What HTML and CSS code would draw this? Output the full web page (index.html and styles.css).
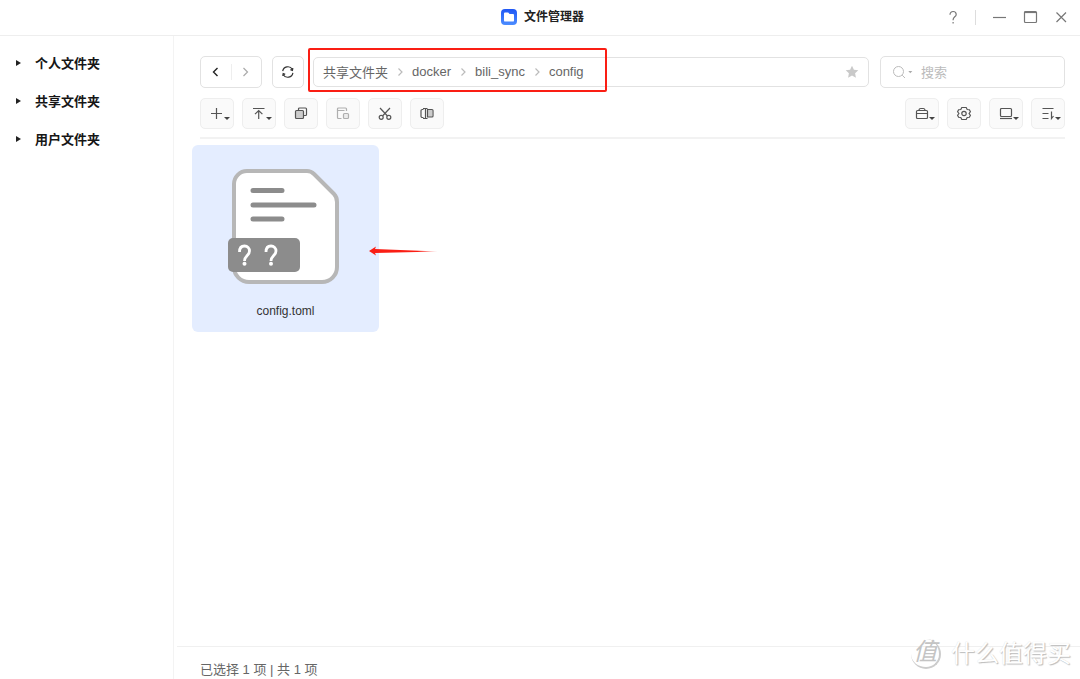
FILE: index.html
```html
<!DOCTYPE html>
<html lang="zh-CN">
<head>
<meta charset="utf-8">
<title>文件管理器</title>
<link rel="stylesheet" href="styles.css">
</head>
<body>
<div class="window">
  <header class="titlebar">
    <h1 class="title">
      <svg class="app-icon" width="16" height="16" viewBox="0 0 16 16"><defs><linearGradient id="blue" x2="0" y2="1"><stop stop-color="#1f57f5"/><stop offset="1" stop-color="#4c8dff"/></linearGradient></defs><rect width="16" height="16" rx="4" fill="url(#blue)"/><path d="M3 4.600a1 1 0 0 1 1-1h3.200l1.400 1.400H12a1 1 0 0 1 1 1v5.400a1.200 1.200 0 0 1-1.200 1.200H4.200A1.200 1.200 0 0 1 3 11.400z" fill="#fff"/></svg>
      文件管理器
    </h1>
    <div class="controls">
      <button class="control" aria-label="帮助"><svg width="16" height="16" viewBox="0 0 16 16"><path d="M6 4.700C6 2.700 7.300 1.500 9.100 1.500s3.100 1.200 3.100 2.900c0 2.300-3.100 2.600-3.100 5.300v.6M9.100 12v1.500"/></svg></button>
      <span class="separator"></span>
      <button class="control" aria-label="最小化"><svg width="16" height="16" viewBox="0 0 16 16"><path d="M2 7.500h13"/></svg></button>
      <button class="control" aria-label="最大化"><svg width="16" height="16" viewBox="0 0 16 16"><rect x="2.500" y="1.500" width="12" height="11" rx="1"/><path d="M2.500 2.500h12"/></svg></button>
      <button class="control" aria-label="关闭"><svg width="16" height="16" viewBox="0 0 16 16"><path d="M3.500 2.500l9.500 9.500M13 2.500L3.500 12"/></svg></button>
    </div>
  </header>
  <div class="body">
    <nav class="sidebar">
      <button class="folder"><span class="caret"></span>个人文件夹</button>
      <button class="folder"><span class="caret"></span>共享文件夹</button>
      <button class="folder"><span class="caret"></span>用户文件夹</button>
    </nav>
    <main class="main">
      <div class="navrow">
        <div class="history">
          <button class="step" aria-label="后退"><svg width="16" height="16" viewBox="0 0 16 16"><path d="M9.500 4L5.500 8l4 4" stroke="#222" stroke-width="1.400"/></svg></button>
          <button class="step" aria-label="前进" disabled><svg width="16" height="16" viewBox="0 0 16 16"><path d="M5.500 4l4 4-4 4" stroke="#aaa" stroke-width="1.200"/></svg></button>
        </div>
        <button class="refresh" aria-label="刷新"><svg width="16" height="16" viewBox="0 0 16 16"><path d="M2.700 7.200a5.200 5.200 0 0 1 9.600-1.900M12.900 8.800a5.200 5.200 0 0 1-9.600 1.900M12.900 4.200l-.5 2.200-2-.8M2.700 11.800l.5-2.200 2 .8" stroke="#333" stroke-width="1.200"/></svg></button>
        <div class="path">
          <a class="crumb" href="#">共享文件夹</a>
          <svg class="chevron" width="8" height="10" viewBox="0 0 8 10"><path d="M2.500 1.500L6 5 2.500 8.500"/></svg>
          <a class="crumb" href="#">docker</a>
          <svg class="chevron" width="8" height="10" viewBox="0 0 8 10"><path d="M2.500 1.500L6 5 2.500 8.500"/></svg>
          <a class="crumb" href="#">bili_sync</a>
          <svg class="chevron" width="8" height="10" viewBox="0 0 8 10"><path d="M2.500 1.500L6 5 2.500 8.500"/></svg>
          <a class="crumb" href="#">config</a>
          <button class="star" aria-label="收藏"><svg width="14" height="14" viewBox="0 0 14 14"><path d="M7 .8l1.900 4 4.400.5-3.200 3 .8 4.400L7 10.600l-3.900 2.100.8-4.400-3.200-3 4.400-.5z" fill="#c9c9c9" stroke="none"/></svg></button>
          <span class="highlight"></span>
        </div>
        <label class="search">
          <svg width="22" height="16" viewBox="0 0 22 16"><circle cx="6.500" cy="7.500" r="5" stroke="#bbb"/><path d="M10.200 11.200l2.800 2.800" stroke="#bbb"/><path d="M16.300 7h4l-2 2.200z" fill="#aaa" stroke="none"/></svg>
          <input class="search-input" type="text" placeholder="搜索" aria-label="搜索">
        </label>
      </div>
      <div class="toolbar">
        <button class="tool menu" aria-label="新建"><svg width="16" height="16" viewBox="0 0 16 16"><path d="M7.500 2v11M2 7.500h11"/></svg></button>
        <button class="tool menu" aria-label="上传"><svg width="16" height="16" viewBox="0 0 16 16"><path d="M2 2.500h11.500M7.700 13V4.500M4 8.200l3.700-3.700 3.700 3.700"/></svg></button>
        <button class="tool" aria-label="复制"><svg width="16" height="16" viewBox="0 0 16 16"><rect x="2.500" y="4.500" width="8" height="8" rx="1" fill="#ccc"/><path d="M5.500 4.500V3a1 1 0 0 1 1-1h6a1 1 0 0 1 1 1v5.500a1 1 0 0 1-1 1h-2"/></svg></button>
        <button class="tool" aria-label="粘贴" disabled><svg width="16" height="16" viewBox="0 0 16 16"><path d="M6.500 12.500h-3a1 1 0 0 1-1-1v-8.500a1 1 0 0 1 1-1h7a1 1 0 0 1 1 1V5M2.500 4.500h7"/><rect x="8.500" y="7.500" width="5" height="5" rx="1" fill="#ddd"/></svg></button>
        <button class="tool" aria-label="剪切"><svg width="16" height="16" viewBox="0 0 16 16"><path d="M3 2l7.500 8M13 2L5.500 10"/><circle cx="4.200" cy="11.300" r="2"/><circle cx="11.800" cy="11.300" r="2"/></svg></button>
        <button class="tool" aria-label="重命名"><svg width="16" height="16" viewBox="0 0 16 16"><rect x="8" y="4" width="5" height="7" fill="#ccc" stroke="none"/><path d="M4.500 3.500H3.300A1.300 1.300 0 0 0 2 4.800v5.400a1.300 1.300 0 0 0 1.300 1.300h1.200M4 2.500h4.500M4 12.500h4.500M6.500 2.500v10M8.500 3.500H13a1 1 0 0 1 1 1V10a1 1 0 0 1-1 1H8.500z"/></svg></button>
        <span class="spacer"></span>
        <button class="tool menu" aria-label="工具"><svg width="16" height="16" viewBox="0 0 16 16"><rect x="2.500" y="4.500" width="11" height="8" rx="1"/><path d="M5 4.500c0-1.500.8-2 1.800-2h2.400c1 0 1.800.5 1.800 2M2.500 7.500h11"/></svg></button>
        <button class="tool" aria-label="设置"><svg width="16" height="16" viewBox="0 0 16 16"><path d="M5.800 1.500h4.400l1 2 2.200.2 1 2.100-1.300 1.700 1.300 1.700-1 2.100-2.200.2-1 2H5.800l-1-2-2.200-.2-1-2.100 1.300-1.700-1.300-1.700 1-2.100 2.200-.2z"/><circle cx="8" cy="7.500" r="2.200"/></svg></button>
        <button class="tool menu" aria-label="视图"><svg width="16" height="16" viewBox="0 0 16 16"><rect x="2.500" y="2.500" width="11" height="8" rx="1"/><path d="M2 12.500h12"/></svg></button>
        <button class="tool menu" aria-label="排序"><svg width="16" height="16" viewBox="0 0 16 16"><path d="M2.500 2.500h11M2.500 7.500h6M2.500 12.500h6M11.500 5.500v7l2-2.500"/></svg></button>
      </div>
      <div class="files">
        <button class="file">
          <svg class="file-icon" width="116" height="116" viewBox="0 0 116 116"><path d="M19 3h60q4 0 7 3l20 20q3 3 3 8v65a15 15 0 0 1-15 15H21a15 15 0 0 1-15-15V16A13 13 0 0 1 19 3z" fill="#fff" stroke="#b7b7b7" stroke-width="4"/><path d="M25 22.500h29M25 37h61M25 51h29" stroke="#8c8c8c" stroke-width="5" stroke-linecap="round"/><rect y="70" width="72" height="34" rx="5" fill="#8c8c8c"/><path d="M11.500 84c0-4 2-6 5-6s5 2 5 5c0 4.500-5 4.500-5 10M38 84c0-4 2-6 5-6s5 2 5 5c0 4.500-5 4.500-5 10" stroke="#fff" stroke-width="2.800"/><circle cx="16.500" cy="95.800" r="2" fill="#fff"/><circle cx="43" cy="95.800" r="2" fill="#fff"/></svg>
          <span class="file-name">config.toml</span>
          <svg class="pointer" width="70" height="10" viewBox="0 0 70 10"><defs><linearGradient id="fade"><stop offset=".7" stop-color="#fa1e14"/><stop offset="1" stop-color="#fa1e14" stop-opacity=".25"/></linearGradient></defs><path d="M0 5l7-4.500-1 2.500L69 5.500 6 7l1 2.500z" fill="url(#fade)"/></svg>
        </button>
      </div>
      <footer class="status">已选择 1 项 | 共 1 项</footer>
    </main>
  </div>
  <div class="watermark">
    <span class="seal">值</span>
    <span>什么值得买</span>
  </div>
</div>
</body>
</html>
```
FILE: styles.css
```css
* {
  box-sizing: border-box;
}

body {
  margin: 0;
  background: #fff;
  color: #666;
  font-family: "Liberation Sans", "Noto Sans CJK SC", sans-serif;
  font-size: 13px;
}

button {
  display: flex;
  align-items: center;
  justify-content: center;
  margin: 0;
  padding: 0;
  border: 0;
  background: none;
  color: inherit;
  font: inherit;
}

svg {
  flex: none;
  fill: none;
}

.window {
  position: relative;
  display: flex;
  flex-direction: column;
  min-height: 100vh;
  overflow: hidden;
}

.titlebar {
  display: grid;
  grid-template-columns: 1fr auto 1fr;
  align-items: center;
  height: 36px;
  border-bottom: 1px solid #eee;
}

.title {
  grid-column: 2;
  display: flex;
  align-items: center;
  gap: 7px;
  margin: 0;
  padding: 0 0 2px 5px;
  color: #222;
  font-size: 12px;
  font-weight: bold;
  line-height: 18px;
}

.controls {
  display: flex;
  align-items: center;
  justify-content: flex-end;
  gap: 15px;
  padding-right: 11px;
}

.control svg {
  stroke: #777;
  stroke-width: 1.2;
}

.separator {
  width: 1px;
  height: 15px;
  background: #ddd;
}

.body {
  display: flex;
  flex: 1;
}

.sidebar {
  width: 174px;
  padding-top: 7px;
  border-right: 1px solid #f3f3f3;
}

.folder {
  justify-content: flex-start;
  gap: 14px;
  width: 100%;
  height: 38px;
  padding-left: 16px;
  color: #161616;
  font-size: 13px;
  font-weight: bold;
}

.caret {
  margin-top: 2px;
  border: 3px solid transparent;
  border-left: 5px solid #222;
  border-right: 0;
}

.main {
  display: flex;
  flex: 1;
  flex-direction: column;
  min-width: 0;
}

.navrow {
  display: flex;
  align-items: center;
  padding: 20px 15px 10px 26px;
}

.history,
.refresh,
.path,
.search {
  height: 32px;
  border: 1px solid #e2e2e2;
  border-radius: 5px;
}

.history {
  display: flex;
  align-items: center;
  width: 62px;
}

.step {
  flex: 1;
  height: 16px;
}

.step + .step {
  border-left: 1px solid #eee;
}

.refresh {
  width: 32px;
  margin: 0 9px 0 10px;
}

.path {
  position: relative;
  display: flex;
  flex: 1;
  align-items: center;
  gap: 8px;
  height: 30px;
  padding: 0 9px 1px;
}

.crumb {
  color: #666;
  text-decoration: none;
}

.chevron {
  stroke: #bbb;
  stroke-width: 1.2;
}

.star {
  margin-left: auto;
}

.highlight {
  position: absolute;
  top: -10px;
  left: -6px;
  width: 299px;
  height: 44px;
  border: 2px solid #fa1e14;
  border-radius: 2px;
}

.search {
  display: flex;
  align-items: center;
  gap: 7px;
  width: 185px;
  margin-left: 11px;
  padding: 0 11px;
}

.search-input {
  min-width: 0;
  flex: 1;
  padding: 0;
  border: 0;
  outline: 0;
  background: none;
  color: #666;
  font: inherit;
}

.search-input::placeholder {
  color: #bbb;
}

.toolbar {
  display: flex;
  gap: 8px;
  margin: 0 15px 0 26px;
  padding-bottom: 8px;
  border-bottom: 2px solid #f2f2f2;
}

.tool {
  position: relative;
  width: 34px;
  height: 31px;
  border: 1px solid #eee;
  border-radius: 5px;
  background: #fafafa;
}

.tool svg {
  stroke: #555;
  stroke-width: 1.2;
}

.tool:disabled svg {
  opacity: 0.45;
}

.menu::after {
  position: absolute;
  right: 3px;
  bottom: 8px;
  border: 3px solid transparent;
  border-top-color: #444;
  border-bottom: 0;
  content: "";
}

.spacer {
  flex: 1;
}

.files {
  flex: 1;
  padding: 6px 18px;
}

.file {
  position: relative;
  flex-direction: column;
  gap: 19px;
  width: 187px;
  height: 187px;
  padding-top: 10px;
  border-radius: 6px;
  background: #e4edff;
  color: #333;
  font-size: 12px;
}

.file-name {
  line-height: 16px;
}

.pointer {
  position: absolute;
  top: 101px;
  left: 177px;
}

.status {
  height: 33px;
  margin-left: 3px;
  padding-left: 23px;
  border-top: 1px solid #f0f0f0;
  line-height: 46px;
  white-space: nowrap;
}

.watermark {
  position: absolute;
  right: 9px;
  bottom: 9px;
  display: flex;
  align-items: center;
  gap: 10px;
  color: #fff;
  font-size: 24px;
  line-height: 32px;
  text-shadow: 1px 1px 1px #bbb, 0 0 1px #ddd;
}

.seal {
  width: 30px;
  height: 30px;
  border-right: 2px solid #ccc;
  border-bottom: 2px solid #ccc;
  border-radius: 50%;
  color: #c4c4c4;
  font-style: italic;
  line-height: 26px;
  text-align: center;
  text-shadow: none;
}
```
